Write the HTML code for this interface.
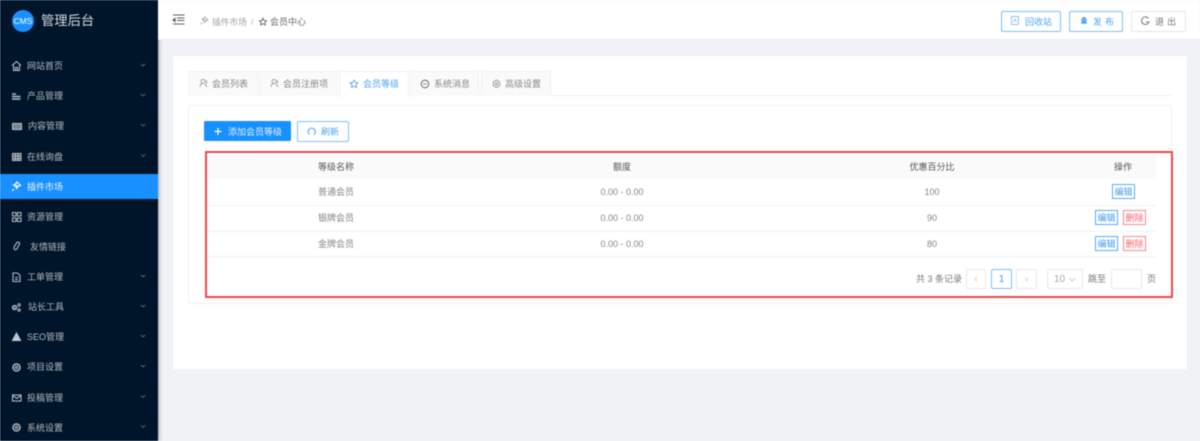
<!DOCTYPE html>
<html lang="zh"><head><meta charset="utf-8"><style>
html,body{margin:0;padding:0}
html{background:#f0f2f5}
body{width:1200px;height:441px;overflow:hidden;position:relative;font-family:"Liberation Sans","Noto Sans CJK SC",sans-serif;font-size:9px;color:#858585;filter:blur(.5px)}
.a{position:absolute;box-sizing:border-box}
.t{position:absolute;white-space:nowrap;line-height:12px}
.c{transform:translateX(-50%)}
svg{position:absolute;overflow:visible;fill:none;stroke:currentColor}
.m{color:#b4bac0;font-size:9px}
.btn{position:absolute;box-sizing:border-box;border:1px solid #1890ff;border-radius:2px;background:#fff}
.tab{position:absolute;top:71px;height:25px;box-sizing:border-box;background:#fafafa;border:1px solid #f0f0f0;border-bottom:0}
.sm{position:absolute;box-sizing:border-box;height:15px;width:23px;border:1px solid #5aa9f5;color:#3f9bf5;font-size:9px;line-height:14px;text-align:center;background:#fff}
.sm.r{border-color:#f58a8f;color:#f4646b}
.pg{position:absolute;top:269px;height:20px;box-sizing:border-box;border:1px solid #e8e8e8;border-radius:2px;background:#fff;color:#bfbfbf;text-align:center;line-height:20px;font-size:10px}
</style></head><body>
<!-- sidebar -->
<div class="a" style="left:0;top:0;width:158px;height:441px;background:#00152a;box-shadow:1px 0 4px rgba(0,21,41,.35)"></div>
<div class="a" style="left:12px;top:10px;width:22px;height:22px;border-radius:50%;background:#1890ff;color:#fff;font-size:8.5px;line-height:22px;text-align:center">CMS</div>
<div class="t" style="left:41px;top:13px;font-size:13.300px;line-height:16px;color:#d5d8db">管理后台</div>
<div class="a" style="left:0;top:173.500px;width:158px;height:25px;background:#1890ff"></div>

<div class="m t" style="left:27px;top:60px">网站首页</div>
<div class="m t" style="left:27px;top:90px">产品管理</div>
<div class="m t" style="left:28px;top:120px">内容管理</div>
<div class="m t" style="left:27px;top:151px">在线询盘</div>
<div class="m t" style="left:27px;top:181px;color:#e8f4ff">插件市场</div>
<div class="m t" style="left:27px;top:211px">资源管理</div>
<div class="m t" style="left:30px;top:241px">友情链接</div>
<div class="m t" style="left:27px;top:271px">工单管理</div>
<div class="m t" style="left:28px;top:301px">站长工具</div>
<div class="m t" style="left:27px;top:331px">SEO管理</div>
<div class="m t" style="left:27px;top:361px">项目设置</div>
<div class="m t" style="left:27px;top:392px">投稿管理</div>
<div class="m t" style="left:27px;top:422px">系统设置</div>

<!-- sidebar icons -->
<svg style="left:0;top:0;color:#b4bac0" width="158" height="441" stroke-width="1.100">
<path d="M12 65.500l4.500-4 4.500 4M13.500 65v5.500h6v-5.500M15.500 70.500v-3h2v3"/>
<path d="M12 94h4M12 96.500h8.500M12 99h8.500" stroke-width="1.600"/>
<rect x="12.500" y="123.500" width="9" height="6" fill="#7b838d"/>
<rect x="12.500" y="153.500" width="8.500" height="7" fill="#3a4855"/><path d="M12.500 156h8.500M12.500 158.500h8.500M15.300 153.500v7M18.200 153.500v7"/>
<path d="M15 184l3 3M17 182l3.500 3.500-2 .5-2 2.500-.5-1.500-2.500-2 1.500-.500zM14 189l-2 2" stroke="#fff"/>
<path d="M12.500 212.500h3.500v3.500h-3.500zM17.500 212.500h3.500v3.500h-3.500zM12.500 218h3.500v3.500h-3.500zM17.500 218h3.500v3.500h-3.500z"/>
<path d="M14.500 246l2.500-3.500a1.500 1.500 0 0 1 2.500 1.500l-2.500 4.500a1.500 1.500 0 0 1-3-.5z"/>
<path d="M13 273h4.500l2.500 2.500v6h-7zM15 277.500h3M15 279.500h3"/>
<circle cx="14.500" cy="307.500" r="1.800" stroke-width="1.700"/><circle cx="19" cy="305" r="1.200"/><circle cx="19" cy="310" r="1.200"/>
<path d="M16.500 333l4 7.500h-8z" fill="#c2c7cc" stroke="#c2c7cc"/>
<circle cx="16.500" cy="367.500" r="3.500" stroke-width="1.500"/><circle cx="16.500" cy="367.500" r="1.200"/>
<rect x="12.500" y="395" width="8.500" height="6"/><path d="M12.500 395.500l4.250 3 4.250-3"/>
<circle cx="16.500" cy="427.500" r="3.500" stroke-width="1.500"/><circle cx="16.500" cy="427.500" r="1.200"/>
<g stroke="#5c6872" stroke-width=".9">
<path d="M141 64l2 2 2-2M141 94l2 2 2-2M141 124l2 2 2-2M141 154.500l2 2 2-2M141 275l2 2 2-2M141 305l2 2 2-2M141 335l2 2 2-2M141 365l2 2 2-2M141 395.500l2 2 2-2M141 425.500l2 2 2-2"/>
</g></svg>

<!-- header -->
<div class="a" style="left:158px;top:0;width:1042px;height:40px;background:#fff;border-bottom:1px solid #eceef1"></div>
<svg style="left:0;top:0;color:#5f5f5f" width="200" height="40" stroke-width="1.100"><path d="M173 15.500h11.500M177 18.500h7.500M177 21h7.500M173 24.500h11.500" transform="translate(0,-.5)"/><path d="M173 20l2-1.500v3z" fill="#5f5f5f"/></svg>
<svg style="left:0;top:0;color:#a0a0a0" width="280" height="40" stroke-width=".8"><path d="M203 18l3 3M205 17l3 3-1.500.3-2 2.200-.4-1.300-2-1.800 1.200-.4zM202.500 22.500l-1.800 1.800"/><path d="M263 18.200l1.100 2.300 2.500.3-1.800 1.700.5 2.500-2.300-1.300-2.300 1.300.5-2.500-1.800-1.700 2.500-.3z" stroke="#555"/></svg>
<div class="t" style="left:212px;top:16px;color:#a3a3a3;font-size:8.700px">插件市场</div>
<div class="t" style="left:251px;top:16px;color:#b5b5b5">/</div>
<div class="t" style="left:270px;top:16px;color:#6a6a6a">会员中心</div>

<div class="btn" style="left:1001px;top:11px;width:60px;height:21px;border-color:#7dbcf8"></div>
<div class="t" style="left:1025px;top:16px;color:#4ea3f6">回收站</div>
<svg style="left:0;top:0;color:#74b4f6" width="1200" height="40" stroke-width=".8"><rect x="1011.500" y="16.500" width="7" height="8"/><path d="M1013.500 22l1.500-3 1.500 3"/></svg>
<div class="btn" style="left:1069px;top:11px;width:54px;height:21px;border-color:#7dbcf8"></div>
<div class="t" style="left:1093px;top:16px;color:#4ea3f6;letter-spacing:3px">发布</div>
<svg style="left:0;top:0;color:#4ea3f6" width="1200" height="40"><path d="M1084 17.500c-1.500 0-2 1-2 2.500v2h4v-2c0-1.500-.5-2.500-2-2.500zM1081 23h6M1084 23v1.500" stroke-width="1" fill="#6db1f5"/></svg>
<div class="btn" style="left:1131px;top:11px;width:55px;height:21px;border-color:#e6e6e6"></div>
<div class="t" style="left:1155px;top:16px;color:#777;letter-spacing:3px">退出</div>
<svg style="left:0;top:0;color:#777" width="1200" height="40" stroke-width="1"><path d="M1148.500 18.500a3.800 3.800 0 1 0 .5 3.500h-3"/></svg>

<!-- card -->
<div class="a" style="left:173px;top:56px;width:1014px;height:313px;background:#fff"></div>
<div class="a" style="left:188px;top:95px;width:984px;height:1px;background:#f0f0f0"></div>
<div class="tab" style="left:188px;width:70px"></div>
<div class="tab" style="left:259px;width:78px"></div>
<div class="tab" style="left:339px;width:70px;background:#fff;height:26px"></div>
<div class="tab" style="left:410px;width:69px"></div>
<div class="tab" style="left:481px;width:70px"></div>
<div class="t" style="left:212px;top:78px">会员列表</div>
<div class="t" style="left:283px;top:78px">会员注册项</div>
<div class="t" style="left:363px;top:78px;color:#4ea3f6">会员等级</div>
<div class="t" style="left:434px;top:78px">系统消息</div>
<div class="t" style="left:505px;top:78px">高级设置</div>
<svg style="left:0;top:0;color:#8a8a8a" width="600" height="100" stroke-width=".8">
<circle cx="203" cy="81.500" r="2"/><path d="M200 87c.3-2.500 1.500-3.500 3-3.500M205 84l2 3M206 80.500c1 .5 1 2 0 3"/>
<circle cx="274" cy="81.500" r="2"/><path d="M271 87c.3-2.500 1.500-3.500 3-3.500M276 84l2 3M277 80.500c1 .5 1 2 0 3"/>
<path d="M354 80l1.200 2.500 2.800.4-2 1.900.5 2.700-2.500-1.300-2.500 1.300.5-2.700-2-1.900 2.800-.4z" stroke="#3f9bf5"/>
<circle cx="425" cy="84" r="3.800" stroke="#555"/><path d="M423 84h4" stroke="#777"/>
<path d="M496.500 80l3.200 1.900v3.700l-3.200 1.900-3.200-1.900v-3.700z"/><circle cx="496.500" cy="83.800" r="1.200"/>
</svg>

<!-- inner card -->
<div class="a" style="left:188px;top:105px;width:984px;height:199px;border:1px solid #f2f2f2;background:#fff"></div>
<div class="a" style="left:204px;top:121px;width:87px;height:20px;background:#1890ff;border-radius:1px"></div>
<div class="t" style="left:228px;top:126px;color:#e3f1ff">添加会员等级</div>
<svg style="left:0;top:0;color:#fff" width="300" height="150" stroke-width="1.200"><path d="M218 128v7M214.500 131.500h7"/></svg>
<div class="btn" style="left:297px;top:121px;width:52px;height:21px;border-color:#84bff7"></div>
<div class="t" style="left:321px;top:126px;color:#4ea3f6">刷新</div>
<svg style="left:0;top:0;color:#4ea3f6" width="400" height="150" stroke-width="1"><path d="M309.500 134.500a3.600 3.600 0 1 1 4.500 0"/></svg>

<!-- table -->
<div class="a" style="left:207px;top:155px;width:949px;height:24px;background:#fafafa"></div>
<div class="a" style="left:207px;top:204.500px;width:949px;height:1px;background:#f2f2f2"></div>
<div class="a" style="left:207px;top:230.500px;width:949px;height:1px;background:#f2f2f2"></div>
<div class="a" style="left:207px;top:255.500px;width:949px;height:1px;background:#f2f2f2"></div>
<div class="t c" style="left:336px;top:161px;color:#555">等级名称</div>
<div class="t c" style="left:622px;top:161px;color:#555">额度</div>
<div class="t c" style="left:932px;top:161px;color:#555">优惠百分比</div>
<div class="t c" style="left:1123px;top:161px;color:#555">操作</div>
<div class="t c" style="left:336px;top:186px">普通会员</div>
<div class="t c" style="left:622px;top:186px">0.00 - 0.00</div>
<div class="t c" style="left:932px;top:186px">100</div>
<div class="t c" style="left:336px;top:212px">银牌会员</div>
<div class="t c" style="left:622px;top:212px">0.00 - 0.00</div>
<div class="t c" style="left:932px;top:212px">90</div>
<div class="t c" style="left:336px;top:238px">金牌会员</div>
<div class="t c" style="left:622px;top:238px">0.00 - 0.00</div>
<div class="t c" style="left:932px;top:238px">80</div>
<div class="sm" style="left:1112px;top:184px">编辑</div>
<div class="sm" style="left:1095px;top:210px">编辑</div>
<div class="sm r" style="left:1123px;top:210px">删除</div>
<div class="sm" style="left:1095px;top:236px">编辑</div>
<div class="sm r" style="left:1123px;top:236px">删除</div>

<!-- pagination -->
<div class="t" style="left:916px;top:273px;color:#777">共 3 条记录</div>
<div class="pg" style="left:966px;width:20px">&lsaquo;</div>
<div class="pg" style="left:991px;width:21px;border-color:#7dbcf8;color:#3f9bf5">1</div>
<div class="pg" style="left:1016px;width:21px">&rsaquo;</div>
<div class="pg" style="left:1047px;width:36px;text-align:left;padding-left:6px;color:#a8a8a8">10</div>
<svg style="left:0;top:0;color:#c4c4c4" width="1200" height="300" stroke-width=".8"><path d="M1069 278l3 3 3-3"/></svg>
<div class="t" style="left:1088px;top:273px;color:#777">跳至</div>
<div class="pg" style="left:1111px;width:31px"></div>
<div class="t" style="left:1147px;top:273px;color:#777">页</div>

<!-- red frame -->
<div class="a" style="left:205px;top:151px;width:968px;height:147px;border:2px solid #e9494b"></div>
</body></html>
